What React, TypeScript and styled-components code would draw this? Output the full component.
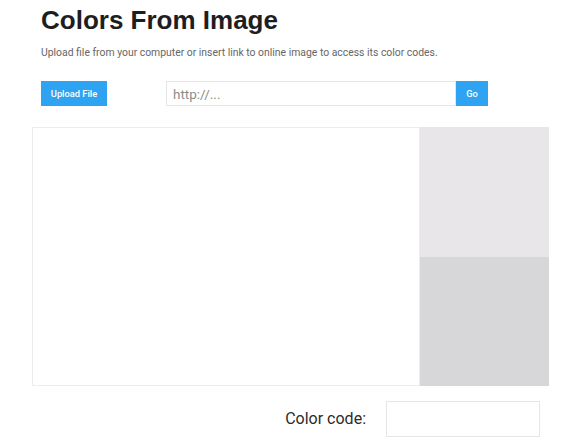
import React from "react";
import styled, { createGlobalStyle } from "styled-components";

const Global = createGlobalStyle`
  html, body { margin: 0; padding: 0; background: #ffffff; }
  body { font-family: Roboto, "Liberation Sans", sans-serif; }
  * { box-sizing: border-box; }
`;

const Page = styled.div`
  width: 588px;
  padding: 0 0 0 32px;
`;

const Header = styled.div`
  padding-left: 9px;
`;

const Title = styled.h1`
  margin: 5px 0 0 0;
  font-family: "Liberation Sans", Arial, sans-serif;
  font-weight: 700;
  font-size: 26px;
  line-height: 31px;
  color: #1e1e1e;
`;

const Subtitle = styled.p`
  margin: 8px 0 0 0;
  font-family: Roboto, sans-serif;
  font-size: 10.4px;
  line-height: 17px;
  color: #666666;
`;

const Controls = styled.div`
  display: flex;
  align-items: stretch;
  margin-top: 20px;
  height: 25px;
`;

const BlueButton = styled.button<{ $w: number }>`
  width: ${(p) => p.$w}px;
  height: 25px;
  border: none;
  padding: 0;
  background: #2ea3f2;
  color: #ffffff;
  font-family: Roboto, sans-serif;
  font-weight: 500;
  font-size: 9.3px;
  cursor: pointer;
`;

const UrlInput = styled.input`
  margin-left: 59px;
  width: 290px;
  height: 25px;
  border: 1px solid #e6e6e6;
  padding: 0 6px;
  font-family: Roboto, sans-serif;
  font-size: 13.5px;
  color: #444;
  outline: none;
  &::placeholder { color: #8c8c8c; }
`;

const Viewer = styled.div`
  display: flex;
  margin-top: 21px;
  width: 517px;
  height: 259px;
`;

const ImagePane = styled.div`
  flex: 1;
  border: 1px solid #ececec;
  background: #ffffff;
`;

const Swatches = styled.div`
  width: 129px;
  display: flex;
  flex-direction: column;
`;

const Swatch = styled.div<{ $c: string }>`
  flex: 1;
  background: ${(p) => p.$c};
`;

const CodeRow = styled.div`
  display: flex;
  justify-content: flex-end;
  align-items: center;
  width: 517px;
  padding-right: 9px;
  margin-top: 15px;
`;

const CodeLabel = styled.span`
  font-family: Roboto, sans-serif;
  font-size: 16px;
  color: #2b2b2b;
  margin-right: 20px;
  margin-top: -1px;
`;

const CodeBox = styled.div`
  width: 154px;
  height: 36px;
  border: 1px solid #e6e6e6;
`;

export default function App() {
  return (
    <>
      <Global />
      <Page>
        <Header>
          <Title>Colors From Image</Title>
          <Subtitle>
            Upload file from your computer or insert link to online image to access its color codes.
          </Subtitle>
          <Controls>
            <BlueButton $w={66}>Upload File</BlueButton>
            <UrlInput placeholder="http://..." />
            <BlueButton $w={32}>Go</BlueButton>
          </Controls>
        </Header>
        <Viewer>
          <ImagePane />
          <Swatches>
            <Swatch $c="#e8e6e9" />
            <Swatch $c="#d7d6d8" />
          </Swatches>
        </Viewer>
        <CodeRow>
          <CodeLabel>Color code:</CodeLabel>
          <CodeBox />
        </CodeRow>
      </Page>
    </>
  );
}
